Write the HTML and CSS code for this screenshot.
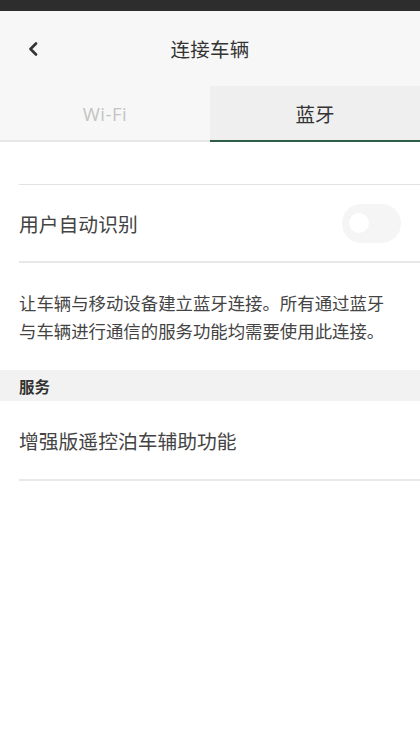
FILE: index.html
```html
<!DOCTYPE html>
<html lang="zh-CN">
<head>
<meta charset="utf-8">
<link rel="stylesheet" href="styles.css">
</head>
<body>
<div class="status"></div>
<header class="header">
  <button class="back" aria-label="返回">
    <svg width="12" height="14" viewBox="0 0 12 14"><path d="M9 1.5 L3.5 7 L9 12.5" fill="none" stroke="#333" stroke-width="2.6" stroke-linecap="round" stroke-linejoin="round"/></svg>
  </button>
  <h1 class="title">连接车辆</h1>
</header>
<nav class="tabs">
  <div class="tab">Wi-Fi</div>
  <div class="tab active">蓝牙</div>
</nav>
<main class="content">
  <div class="spacer"></div>
  <div class="row">
    <span class="label">用户自动识别</span>
    <span class="toggle"><span class="knob"></span></span>
  </div>
  <p class="desc">让车辆与移动设备建立蓝牙连接。所有通过蓝牙与车辆进行通信的服务功能均需要使用此连接。</p>
  <div class="section">服务</div>
  <div class="row row-last">
    <span class="label">增强版遥控泊车辅助功能</span>
  </div>
</main>
</body>
</html>
```
FILE: styles.css
```css
* { box-sizing: border-box; }
html, body { margin: 0; padding: 0; }
body {
  width: 420px;
  height: 756px;
  background: #fff;
  font-family: "Noto Sans CJK SC", "Noto Sans", sans-serif;
  color: #444;
  overflow: hidden;
}
.status { height: 11px; background: #2d2d2d; }
.header {
  height: 75px;
  background: #f7f7f7;
  display: flex;
  align-items: center;
  justify-content: center;
  position: relative;
}
.back {
  position: absolute;
  left: 26px;
  top: 30px;
  border: 0;
  background: none;
  padding: 0;
  width: 14px;
  height: 16px;
  display: flex;
  align-items: center;
  justify-content: center;
}
.title {
  margin: 0;
  font-size: 19.5px;
  font-weight: 400;
  color: #333;
  letter-spacing: 0.2px;
}
.tabs {
  display: flex;
  height: 56px;
}
.tab {
  flex: 1;
  display: flex;
  align-items: center;
  justify-content: center;
  background: #f7f7f7;
  border-bottom: 2px solid #e6e6e6;
  font-size: 18.5px;
  color: #c4c4c4;
  font-family: "Open Sans", "Noto Sans CJK SC", sans-serif;
  letter-spacing: 0.5px;
  padding-top: 1px;
}
.tab.active {
  background: #efefef;
  border-bottom: 2px solid #2e5e47;
  color: #333;
  font-size: 19.5px;
  letter-spacing: 0;
  font-family: "Noto Sans CJK SC", sans-serif;
}
.content { display: flex; flex-direction: column; }
.spacer {
  height: 43px;
  margin-left: 19px;
  border-bottom: 1px solid #e3e3e3;
}
.row {
  margin-left: 19px;
  padding-right: 19px;
  height: 78px;
  display: flex;
  align-items: center;
  justify-content: space-between;
  border-bottom: 2px solid #e8e8e8;
}
.row-last { height: 80px; }
.label { font-size: 19.8px; color: #444; }
.toggle {
  width: 59px;
  height: 39px;
  border-radius: 20px;
  background: #f5f5f5;
  display: flex;
  align-items: center;
  padding-left: 7px;
}
.knob {
  width: 20px;
  height: 20px;
  border-radius: 50%;
  background: #fff;
}
.desc {
  margin: 0;
  padding: 26px 30px 25px 19px;
  font-size: 17.4px;
  line-height: 28px;
  color: #444;
}
.section {
  height: 31px;
  background: #f2f2f2;
  padding-left: 19px;
  display: flex;
  align-items: center;
  font-size: 15.5px;
  font-weight: 700;
  color: #333;
}
```
